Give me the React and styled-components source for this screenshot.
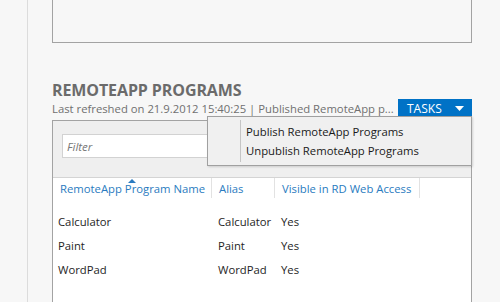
import React from 'react';
import styled, { createGlobalStyle } from 'styled-components';

const GlobalStyle = createGlobalStyle`
  html, body {
    margin: 0;
    padding: 0;
    background: #f7f7f7;
    font-family: "Open Sans", "Noto Sans", sans-serif;
    overflow: hidden;
  }
`;

const Page = styled.div`
  display: flex;
  height: 302px;
`;

const Rail = styled.div`
  width: 27px;
  flex-shrink: 0;
  border-right: 1px solid #dcdcdc;
`;

const Main = styled.div`
  width: 420px;
  margin-left: 24px;
  display: flex;
  flex-direction: column;
`;

const TopBox = styled.div`
  height: 43px;
  border: 1px solid #a3a3a3;
  border-top: none;
  box-sizing: border-box;
`;

const Section = styled.div`
  position: relative;
  margin-top: 38px;
  display: flex;
  flex-direction: column;
  flex: 1;
`;

const Heading = styled.div`
  font-size: 16px;
  font-weight: 700;
  color: #6b6b6b;
  line-height: 18px;
  letter-spacing: -0.1px;
`;

const SubRow = styled.div`
  display: flex;
  align-items: center;
  justify-content: space-between;
  height: 18px;
`;

const Refreshed = styled.div`
  font-size: 11.3px;
  color: #707070;
  white-space: nowrap;
`;

const TasksButton = styled.div`
  width: 74px;
  height: 18px;
  background: #0072c6;
  color: #fff;
  font-size: 12px;
  display: flex;
  align-items: center;
  justify-content: space-between;
  padding: 0 8px 0 9px;
  box-sizing: border-box;
`;

const Panel = styled.div`
  margin-top: 3px;
  flex: 1;
  border: 1px solid #a3a3a3;
  border-bottom: none;
  background: #fff;
  display: flex;
  flex-direction: column;
`;

const FilterBar = styled.div`
  height: 57px;
  background: #efefef;
  border-bottom: 1px solid #d4d4d4;
  padding: 13px 9px 0;
  box-sizing: border-box;
`;

const FilterInput = styled.div`
  width: 220px;
  height: 24px;
  box-sizing: border-box;
  background: #fff;
  border: 1px solid #d2d2d2;
  font-size: 11.5px;
  font-style: italic;
  color: #777;
  padding-left: 4px;
  display: flex;
  align-items: center;
`;

const HeaderRow = styled.div`
  display: flex;
  height: 20px;
  align-items: stretch;
`;

const HeaderCell = styled.div`
  position: relative;
  width: ${p => p.w}px;
  padding-left: ${p => p.pl || 7}px;
  box-sizing: border-box;
  border-right: 1px solid #e2e2e2;
  color: #2a7bc0;
  font-size: 11.3px;
  display: flex;
  align-items: center;
  white-space: nowrap;
`;

const SortArrow = styled.span`
  position: absolute;
  top: 1px;
  left: 75px;
  width: 0;
  height: 0;
  border-left: 4px solid transparent;
  border-right: 4px solid transparent;
  border-bottom: 4px solid #2a7bc0;
`;

const Rows = styled.div`
  padding-top: 11px;
`;

const Row = styled.div`
  display: flex;
  height: 24px;
  align-items: center;
  font-size: 11.3px;
  color: #1e1e1e;
`;

const Cell = styled.div`
  width: ${p => p.w}px;
  padding-left: ${p => p.pl || 5}px;
  box-sizing: border-box;
  white-space: nowrap;
`;

const Menu = styled.div`
  position: absolute;
  top: 35px;
  left: 155px;
  width: 265px;
  height: 50px;
  box-sizing: border-box;
  background: #f0f0f0;
  border: 1px solid #a0a0a0;
  box-shadow: 1px 1px 2px rgba(0, 0, 0, 0.15);
  display: flex;
  padding: 3px 0;
`;

const MenuGutter = styled.div`
  width: 32px;
  border-right: 1px solid #c5c5c5;
`;

const MenuItems = styled.div`
  display: flex;
  flex-direction: column;
  justify-content: center;
  padding-left: 5px;
`;

const MenuItem = styled.div`
  height: 19px;
  display: flex;
  align-items: center;
  font-size: 11.3px;
  color: #1a1a1a;
`;

const Caret = () => (
  <svg width="9" height="5" viewBox="0 0 9 5">
    <path d="M0 0 H9 L4.5 5 Z" fill="#fff" />
  </svg>
);

const programs = [
  ['Calculator', 'Calculator', 'Yes'],
  ['Paint', 'Paint', 'Yes'],
  ['WordPad', 'WordPad', 'Yes'],
];

export default function App() {
  return (
    <>
      <GlobalStyle />
      <Page>
        <Rail />
        <Main>
          <TopBox />
          <Section>
            <Heading>REMOTEAPP PROGRAMS</Heading>
            <SubRow>
              <Refreshed>Last refreshed on 21.9.2012 15:40:25 | Published RemoteApp p...</Refreshed>
              <TasksButton>TASKS <Caret /></TasksButton>
            </SubRow>
            <Panel>
              <FilterBar>
                <FilterInput>Filter</FilterInput>
              </FilterBar>
              <HeaderRow>
                <HeaderCell w={159}>
                  <SortArrow />
                  RemoteApp Program Name
                </HeaderCell>
                <HeaderCell w={63}>Alias</HeaderCell>
                <HeaderCell w={145}>Visible in RD Web Access</HeaderCell>
              </HeaderRow>
              <Rows>
                {programs.map(([name, alias, visible]) => (
                  <Row key={name}>
                    <Cell w={159}>{name}</Cell>
                    <Cell w={63} pl={6}>{alias}</Cell>
                    <Cell w={145} pl={6}>{visible}</Cell>
                  </Row>
                ))}
              </Rows>
            </Panel>
            <Menu>
              <MenuGutter />
              <MenuItems>
                <MenuItem>Publish RemoteApp Programs</MenuItem>
                <MenuItem>Unpublish RemoteApp Programs</MenuItem>
              </MenuItems>
            </Menu>
          </Section>
        </Main>
      </Page>
    </>
  );
}
